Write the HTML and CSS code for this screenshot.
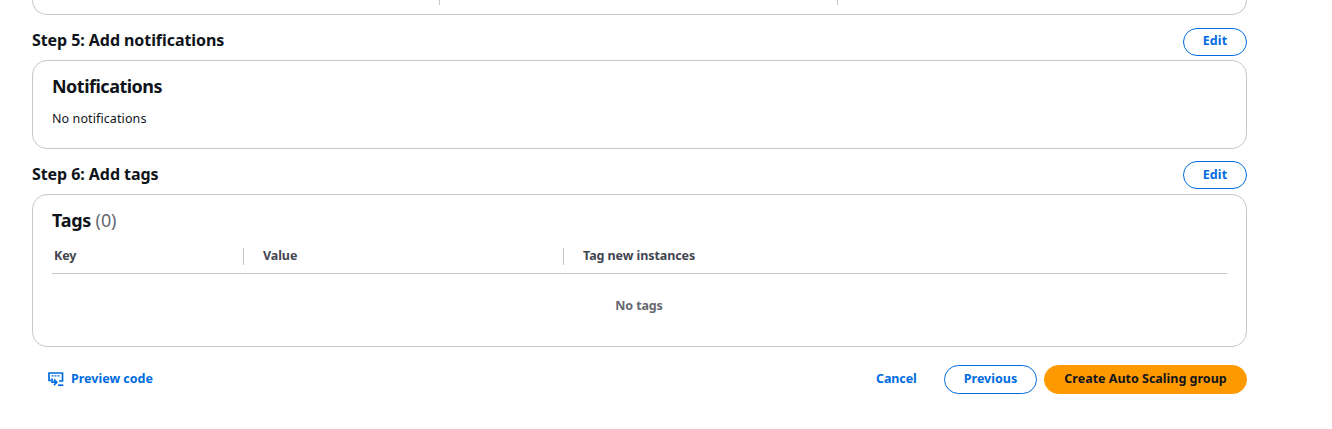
FILE: index.html
```html
<!DOCTYPE html>
<html lang="en">
<head>
<meta charset="utf-8">
<title>Create Auto Scaling group</title>
<link rel="stylesheet" href="styles.css">
</head>
<body>
<main class="review">
  <section class="card card-cut"><div></div><div></div><div></div></section>

  <header class="step">
    <h2 class="step-title">Step 5: Add notifications</h2>
    <button class="btn btn-edit">Edit</button>
  </header>
  <section class="card card-notifications">
    <h3 class="card-title">Notifications</h3>
    <p class="card-text">No notifications</p>
  </section>

  <header class="step step-tags">
    <h2 class="step-title">Step 6: Add tags</h2>
    <button class="btn btn-edit btn-low">Edit</button>
  </header>
  <section class="card card-tags">
    <h3 class="card-title card-title-count">Tags <span class="count">(0)</span></h3>
    <div class="table-head">
      <div class="th">Key</div>
      <div class="th">Value</div>
      <div class="th">Tag new instances</div>
    </div>
    <div class="empty">No tags</div>
  </section>

  <footer class="actions">
    <a class="link preview">
      <svg class="icon" width="16" height="16" viewBox="0 0 16 16" fill="none" stroke="currentColor" stroke-width="1.7">
        <path d="M3 9.500H1V2h13.500v8H11"/>
        <path d="M3.500 4.800h2M6.500 4.800h2M9.500 4.800h2" stroke-width="1.300"/>
        <path d="M4 7.500v3.700h4.500"/>
        <path d="M6 8.300l2.800 2.900L6 14.100"/>
        <path d="M10 14.200h5.300"/>
      </svg>
      <span>Preview code</span>
    </a>
    <div class="buttons">
      <a class="link cancel">Cancel</a>
      <button class="btn btn-previous">Previous</button>
      <button class="btn btn-primary">Create Auto Scaling group</button>
    </div>
  </footer>
</main>
</body>
</html>
```
FILE: styles.css
```css
* { box-sizing: border-box; }
body {
  margin: 0;
  background: #fff;
  color: #0f141a;
  font-family: "Noto Sans", "Open Sans", sans-serif;
  font-size: 13px;
  overflow: hidden;
}
h2, h3, p { margin: 0; }
.review { width: 1215px; margin-left: 32px; }
.card { border: 1px solid #c6c6cd; border-radius: 15px; padding: 0 19px; }
.card-cut {
  height: 15px;
  padding: 0 0 9px;
  border-top: 0;
  border-radius: 0 0 15px 15px;
  display: grid;
  grid-template-columns: 406px 398px 1fr;
}
.card-cut div + div { border-left: 1px solid #c6c6cd; }
.card-cut div { height: 5px; }
.step { height: 45px; padding-top: 13px; display: flex; justify-content: space-between; }
.step-tags { padding-top: 12px; }
.step-title { font-size: 16px; line-height: 24px; font-weight: 700; letter-spacing: -0.07px; }
.step-tags .step-title { line-height: 26px; }
.card-notifications { height: 89px; padding-top: 14px; }
.card-title { font-size: 18px; line-height: 23px; font-weight: 700; letter-spacing: -0.51px; }
.card-title-count { letter-spacing: -0.25px; }
.card-text { font-size: 12.5px; line-height: 20px; margin-top: 11px; letter-spacing: 0.1px; }
.card-tags { height: 153px; padding-top: 14px; }
.count { font-weight: 400; color: #656871; letter-spacing: -0.1px; }
.table-head {
  height: 33px;
  margin-top: 9px;
  padding: 7px 0 8px;
  border-bottom: 1px solid #c6c6cd;
  display: grid;
  grid-template-columns: 191px 320px 1fr;
  color: #424650;
}
.th { padding-left: 19px; font-size: 12.5px; line-height: 16px; height: 17px; font-weight: 700; letter-spacing: -0.08px; border-left: 1px solid #c6c6cd; }
.th:first-child { padding-left: 1px; border-left-color: transparent; }
.empty { padding: 22px 1px 0 0; line-height: 20px; font-size: 12.5px; font-weight: 700; letter-spacing: -0.15px; text-align: center; color: #656871; }
.btn {
  height: 28px;
  padding: 0 0 2px;
  border: 1px solid #006ce0;
  border-radius: 15px;
  background: #fff;
  color: #006ce0;
  font: 700 12.5px/20px "Noto Sans", "Open Sans", sans-serif;
  letter-spacing: 0;
  white-space: nowrap;
}
.btn-edit { width: 64px; letter-spacing: 0.1px; }
.btn-low { padding-bottom: 0; }
.actions { height: 47px; padding: 18px 0 0 16px; display: flex; justify-content: space-between; }
.link { display: flex; align-items: center; height: 27px; color: #006ce0; font-size: 12.5px; font-weight: 700; letter-spacing: -0.1px; }
.preview { gap: 7px; letter-spacing: 0; }
.buttons { display: flex; }
.cancel { width: 68px; }
.btn-previous { width: 93px; height: 29px; margin-right: 7px; }
.btn-primary { width: 203px; height: 29px; background: #f90; border-color: #f90; color: #0f141a; }
```
